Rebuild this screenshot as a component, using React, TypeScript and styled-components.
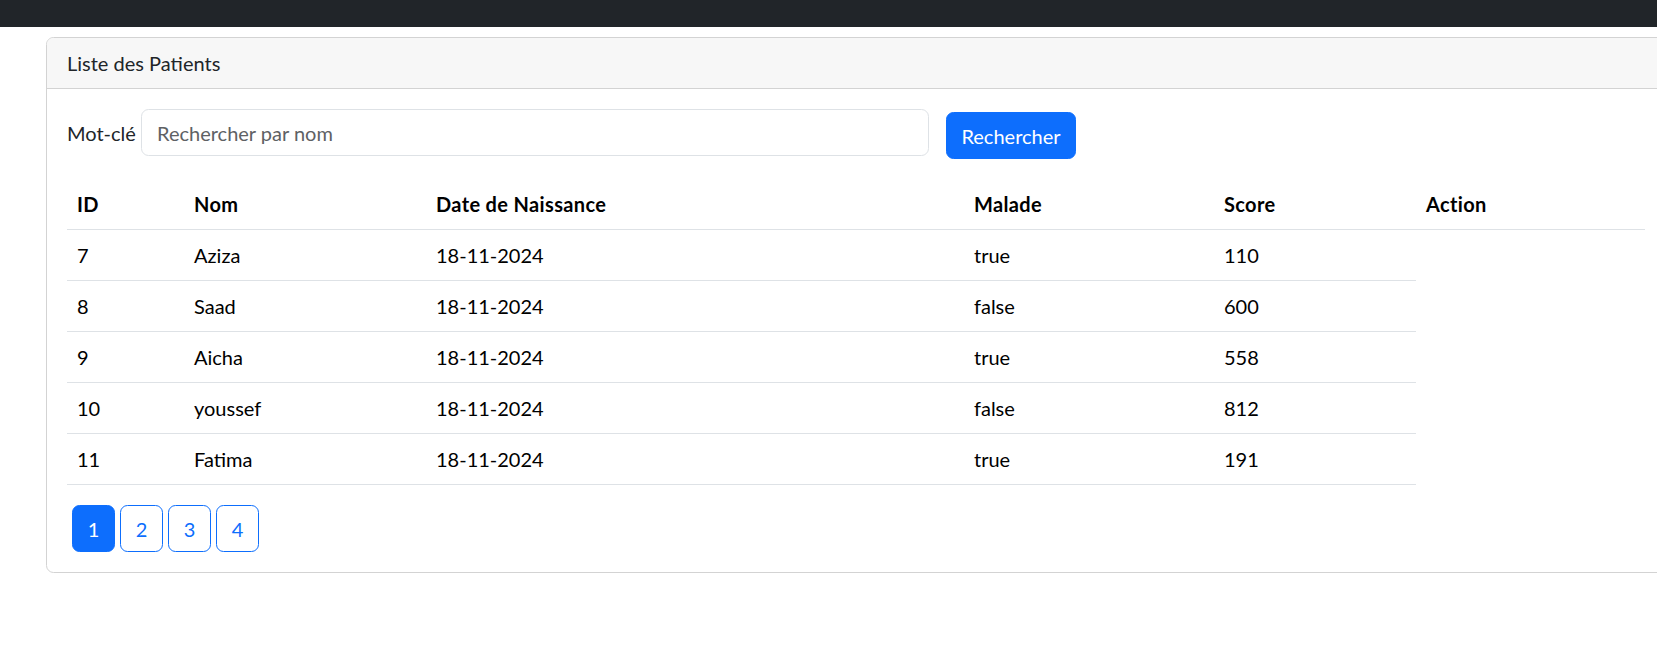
import React from "react";
import styled, { createGlobalStyle } from "styled-components";

const GlobalStyle = createGlobalStyle`
  html, body {
    margin: 0;
    padding: 0;
    overflow: hidden;
    background: #ffffff;
  }
  body {
    font-family: "Lato", "Noto Sans", "Liberation Sans", sans-serif;
    font-size: 20px;
    line-height: 30px;
    color: #212529;
  }
  * { box-sizing: border-box; }
`;

const TopBar = styled.div`
  height: 27px;
  background: #212529;
`;

const Page = styled.div`
  padding: 10px 0 0 46px;
`;

const Card = styled.section`
  width: 1620px;
  border: 1px solid #d3d3d3;
  border-radius: 7.5px;
  background: #ffffff;
`;

const CardHeader = styled.header`
  padding: 10px 20px;
  line-height: 30px;
  background: #f7f7f7;
  border-bottom: 1px solid #d3d3d3;
  border-radius: 6.5px 6.5px 0 0;
  color: #212529;
`;

const CardBody = styled.div`
  padding: 20px;
`;

const SearchRow = styled.form`
  display: flex;
  align-items: flex-start;
  margin-bottom: 20px;
`;

const Label = styled.label`
  display: flex;
  align-items: center;
  width: 74px;
  height: 47px;
  color: #212529;
  white-space: nowrap;
`;

const Input = styled.input`
  width: 788px;
  height: 47px;
  padding: 7.5px 15px;
  font: inherit;
  line-height: 30px;
  color: #212529;
  border: 1px solid #dee2e6;
  border-radius: 7.5px;
  outline: none;
  &::placeholder {
    color: #5e6164;
  }
`;

const PrimaryButton = styled.button`
  margin: 3px 0 0 17px;
  width: 130px;
  height: 47px;
  padding: 7.5px 0;
  font: inherit;
  line-height: 30px;
  text-align: center;
  color: #ffffff;
  background: #0d6efd;
  border: 1px solid #0d6efd;
  border-radius: 7.5px;
  cursor: pointer;
`;

const Table = styled.table`
  width: 1578px;
  border-collapse: collapse;
  table-layout: fixed;
  margin-bottom: 20px;
  color: #000000;
`;

const Th = styled.th`
  text-align: left;
  font-weight: 700;
  letter-spacing: 0.35px;
  padding: 10px;
  line-height: 30px;
  border-bottom: 1px solid #dee2e6;
`;

const Td = styled.td`
  padding: 10px;
  line-height: 30px;
  border-bottom: 1px solid #dee2e6;
`;

const Pagination = styled.nav`
  display: flex;
`;

const PageButton = styled.button<{ $active?: boolean }>`
  margin-left: 5px;
  width: 43px;
  height: 47px;
  padding: 7.5px 0;
  font: inherit;
  line-height: 30px;
  text-align: center;
  border-radius: 7.5px;
  border: 1px solid #0d6efd;
  color: ${(p) => (p.$active ? "#ffffff" : "#0d6efd")};
  background: ${(p) => (p.$active ? "#0d6efd" : "#ffffff")};
  cursor: pointer;
`;

const columns = [
  { label: "ID", width: 117 },
  { label: "Nom", width: 242 },
  { label: "Date de Naissance", width: 538 },
  { label: "Malade", width: 250 },
  { label: "Score", width: 202 },
  { label: "Action", width: 229 },
];

const patients = [
  { id: 7, nom: "Aziza", date: "18-11-2024", malade: true, score: 110 },
  { id: 8, nom: "Saad", date: "18-11-2024", malade: false, score: 600 },
  { id: 9, nom: "Aicha", date: "18-11-2024", malade: true, score: 558 },
  { id: 10, nom: "youssef", date: "18-11-2024", malade: false, score: 812 },
  { id: 11, nom: "Fatima", date: "18-11-2024", malade: true, score: 191 },
];

export default function App() {
  return (
    <>
      <GlobalStyle />
      <TopBar />
      <Page>
        <Card>
          <CardHeader>Liste des Patients</CardHeader>
          <CardBody>
            <SearchRow onSubmit={(e) => e.preventDefault()}>
              <Label htmlFor="kw">Mot-clé</Label>
              <Input id="kw" placeholder="Rechercher par nom" />
              <PrimaryButton type="submit">Rechercher</PrimaryButton>
            </SearchRow>
            <Table>
              <colgroup>
                {columns.map((c) => (
                  <col key={c.label} style={{ width: c.width }} />
                ))}
              </colgroup>
              <thead>
                <tr>
                  {columns.map((c) => (
                    <Th key={c.label}>{c.label}</Th>
                  ))}
                </tr>
              </thead>
              <tbody>
                {patients.map((p) => (
                  <tr key={p.id}>
                    <Td>{p.id}</Td>
                    <Td>{p.nom}</Td>
                    <Td>{p.date}</Td>
                    <Td>{String(p.malade)}</Td>
                    <Td>{p.score}</Td>
                  </tr>
                ))}
              </tbody>
            </Table>
            <Pagination>
              {[1, 2, 3, 4].map((n) => (
                <PageButton key={n} $active={n === 1}>
                  {n}
                </PageButton>
              ))}
            </Pagination>
          </CardBody>
        </Card>
      </Page>
    </>
  );
}
